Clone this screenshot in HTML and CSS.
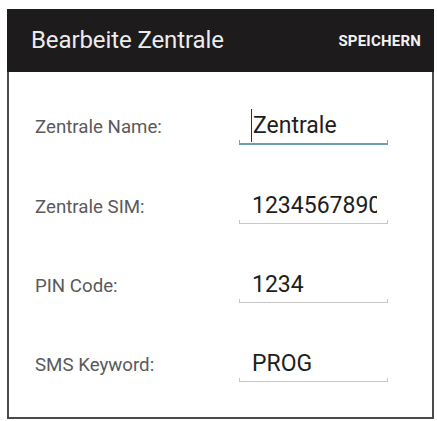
FILE: index.html
```html
<!DOCTYPE html>
<html lang="de">
<head>
<meta charset="utf-8">
<title>Bearbeite Zentrale</title>
<link rel="stylesheet" href="styles.css">
</head>
<body>
<div class="frame">
  <header class="bar">
    <span class="title">Bearbeite Zentrale</span>
    <span class="action">SPEICHERN</span>
  </header>
  <form class="form">
    <div class="row">
      <label class="label">Zentrale Name:</label>
      <div class="field focused">
        <div class="value"><span class="caret">Zentrale</span></div>
        <div class="line"></div>
      </div>
    </div>
    <div class="row">
      <label class="label">Zentrale SIM:</label>
      <div class="field">
        <div class="value">1234567890</div>
        <div class="line"></div>
      </div>
    </div>
    <div class="row">
      <label class="label">PIN Code:</label>
      <div class="field">
        <div class="value">1234</div>
        <div class="line"></div>
      </div>
    </div>
    <div class="row">
      <label class="label">SMS Keyword:</label>
      <div class="field">
        <div class="value">PROG</div>
        <div class="line"></div>
      </div>
    </div>
  </form>
</div>
</body>
</html>
```
FILE: styles.css
```css
html, body {
  margin: 0;
  padding: 0;
  background: #fff;
}
body {
  padding: 9px 0 0 7px;
  font-family: Roboto, "Noto Sans", sans-serif;
}
.frame {
  width: 427px;
  height: 410px;
  box-sizing: border-box;
  border: 2px solid #4a4a4a;
  border-top: none;
  background: #fff;
  display: flex;
  flex-direction: column;
}
.bar {
  height: 63px;
  margin: 0 -2px;
  background: #1d1b1c;
  display: flex;
  align-items: center;
  justify-content: space-between;
  padding: 0 13px 0 24px;
}
.title {
  color: #ececec;
  font-size: 24px;
  letter-spacing: -0.1px;
  padding-bottom: 1px;
}
.action {
  color: #f2f2f2;
  font-size: 15px;
  font-weight: bold;
  letter-spacing: 0.2px;
}
.form {
  display: flex;
  flex-direction: column;
  gap: 47px;
  padding: 40px 0 0 26px;
}
.row {
  display: flex;
  align-items: baseline;
}
.label {
  width: 204px;
  font-size: 18.7px;
  color: #5a5a5a;
}
.field {
  width: 149px;
}
.value {
  font-size: 23px;
  line-height: 27px;
  color: #1e1e1e;
  margin: 0 11px 0 13px;
  white-space: nowrap;
  overflow-x: clip;
  overflow-y: visible;
}
.focused .value {
  margin-left: 12px;
}
.caret {
  border-left: 1px solid #333;
  padding: 3px 0 3px 1px;
}
.line {
  margin-top: 1px;
  height: 3px;
  border: 1px solid #c8c8c8;
  border-top: none;
}
.focused .line {
  border-color: #8a9aa3;
  border-bottom: 2px solid #6d9fb6;
}
```
